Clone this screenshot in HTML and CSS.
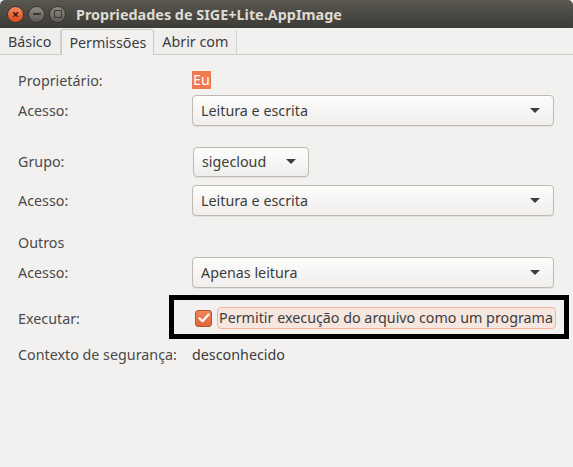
FILE: index.html
```html
<!DOCTYPE html>
<html lang="pt">
<head>
  <meta charset="UTF-8">
  <title>Propriedades de SIGE+Lite.AppImage</title>
  <link rel="stylesheet" href="styles.css">
</head>
<body>
  <div class="window">
    <div class="titlebar">
      <div class="wbuttons">
        <span class="wbtn close">&#215;</span>
        <span class="wbtn minimize"><i class="bar"></i></span>
        <span class="wbtn maximize"><i class="box"></i></span>
      </div>
      <span class="title">Propriedades de SIGE+Lite.AppImage</span>
    </div>

    <div class="tabs">
      <span class="tab first">Básico</span>
      <span class="tab active">Permissões</span>
      <span class="tab">Abrir com</span>
    </div>

    <div class="content">
      <div class="row r-owner">
        <span class="label">Proprietário:</span>
        <span class="owner">Eu</span>
      </div>
      <div class="row r-combo">
        <span class="label">Acesso:</span>
        <div class="combo wide">Leitura e escrita<span class="arrow"></span></div>
      </div>

      <div class="row r-combo gap-big">
        <span class="label">Grupo:</span>
        <div class="combo small">sigecloud<span class="arrow"></span></div>
      </div>
      <div class="row r-combo gap-small">
        <span class="label">Acesso:</span>
        <div class="combo wide">Leitura e escrita<span class="arrow"></span></div>
      </div>

      <div class="row r-text gap-others">
        <span class="label">Outros</span>
      </div>
      <div class="row r-combo gap-tiny">
        <span class="label">Acesso:</span>
        <div class="combo wide">Apenas leitura<span class="arrow"></span></div>
      </div>

      <div class="row r-exec">
        <span class="label">Executar:</span>
        <div class="exec">
          <span class="check"><svg width="12" height="10" viewBox="0 0 12 10"><path d="M1.5 5.2 L4.6 8.2 L10.5 1.6" fill="none" stroke="#fff" stroke-width="2.2" stroke-linecap="round" stroke-linejoin="round"/></svg></span>
          <span class="exec-label">Permitir execução do arquivo como um programa</span>
          <div class="mark"></div>
        </div>
      </div>

      <div class="row r-text gap-context">
        <span class="label">Contexto de segurança:</span>
        <span class="value">desconhecido</span>
      </div>
    </div>
  </div>
</body>
</html>
```

FILE: styles.css
```css
html, body {
  margin: 0;
  padding: 0;
}
body {
  font-family: 'Noto Sans', 'DejaVu Sans', sans-serif;
  font-size: 14.3px;
  color: #3c3c3c;
  background: #f2f1f0;
  width: 573px;
  height: 467px;
  overflow: hidden;
}
.window {
  height: 467px;
  background: #f2f1f0;
}
.titlebar {
  height: 28px;
  display: flex;
  align-items: center;
  background: linear-gradient(#5a5750, #3c3b37);
  border-radius: 5px 5px 0 0;
}
.wbuttons {
  display: flex;
  gap: 4px;
  padding-left: 7px;
}
.wbtn {
  width: 15px;
  height: 15px;
  border-radius: 50%;
  display: flex;
  align-items: center;
  justify-content: center;
  background: linear-gradient(#8e8b84, #5e5b55);
  border: 1px solid #35342f;
}
.wbtn.close {
  background: linear-gradient(#f58a5e, #df4a1f);
  color: #3a1d10;
  font-size: 13px;
  line-height: 1;
  font-weight: bold;
}
.bar {
  width: 8px;
  height: 2px;
  background: #3a3935;
}
.box {
  width: 6px;
  height: 6px;
  border: 1.5px solid #3a3935;
}
.title {
  margin-left: 10px;
  font-weight: bold;
  color: #dfdbd2;
  font-size: 14.4px;
}
.tabs {
  display: flex;
  height: 26px;
  align-items: flex-end;
  border-bottom: 1px solid #cfcdca;
}
.tab {
  height: 24px;
  line-height: 24px;
  padding: 0 8px;
  color: #3c3c3c;
  border-right: 1px solid #d6d4d1;
  background: #efeeec;
}
.tab.first {
  padding: 0 9px 0 8px;
}
.tab.active {
  height: 25px;
  line-height: 25px;
  background: #f2f1f0;
  border: 1px solid #cbc9c5;
  border-bottom: none;
  border-radius: 3px 3px 0 0;
  padding: 0 7px;
  margin-bottom: -1px;
}
.content {
  padding: 16px 19px 0 18px;
}
.row {
  display: flex;
  align-items: center;
}
.label {
  width: 174px;
  flex: none;
  color: #4a4a4a;
}
.r-owner {
  height: 18px;
}
.owner {
  background: #ef7a4f;
  color: #fff;
  padding: 0 1px;
  line-height: 18px;
}
.r-combo {
  height: 31px;
  margin-top: 6px;
}
.gap-big { margin-top: 20px; }
.gap-small { margin-top: 8px; }
.gap-tiny { margin-top: 6px; }
.combo {
  box-sizing: border-box;
  height: 31px;
  border: 1px solid #bdbab5;
  border-radius: 4px;
  background: linear-gradient(#fdfdfc, #efeeec);
  display: flex;
  align-items: center;
  justify-content: space-between;
  padding: 0 13px 0 8px;
  box-shadow: 0 1px 0 #e2e0dd;
}
.combo.wide { width: 362px; }
.combo.small { width: 116px; height: 30px; margin-left: 1px; padding-right: 12px; }
.arrow {
  width: 0;
  height: 0;
  border-left: 5px solid transparent;
  border-right: 5px solid transparent;
  border-top: 5px solid #3c3c3c;
}
.r-text {
  height: 18px;
}
.gap-others { margin-top: 17px; }
.r-exec {
  height: 22px;
  margin-top: 19px;
}
.exec {
  position: relative;
  display: flex;
  align-items: center;
  gap: 5px;
  margin-left: 3px;
}
.check {
  width: 15px;
  height: 15px;
  border-radius: 3px;
  background: linear-gradient(#f2855a, #e0643a);
  border: 1px solid #b8532f;
  display: flex;
  align-items: center;
  justify-content: center;
}
.exec-label {
  height: 20px;
  line-height: 20px;
  padding: 0 1px;
  border: 1px solid #f2b39a;
  border-radius: 4px;
  background: #f5e6e0;
  width: 335px;
  white-space: nowrap;
}
.mark {
  position: absolute;
  left: -26px;
  top: -12px;
  width: 390px;
  height: 34px;
  border: 5px solid #000;
}
.gap-context { margin-top: 16px; }
.value {
  color: #3c3c3c;
}
```
